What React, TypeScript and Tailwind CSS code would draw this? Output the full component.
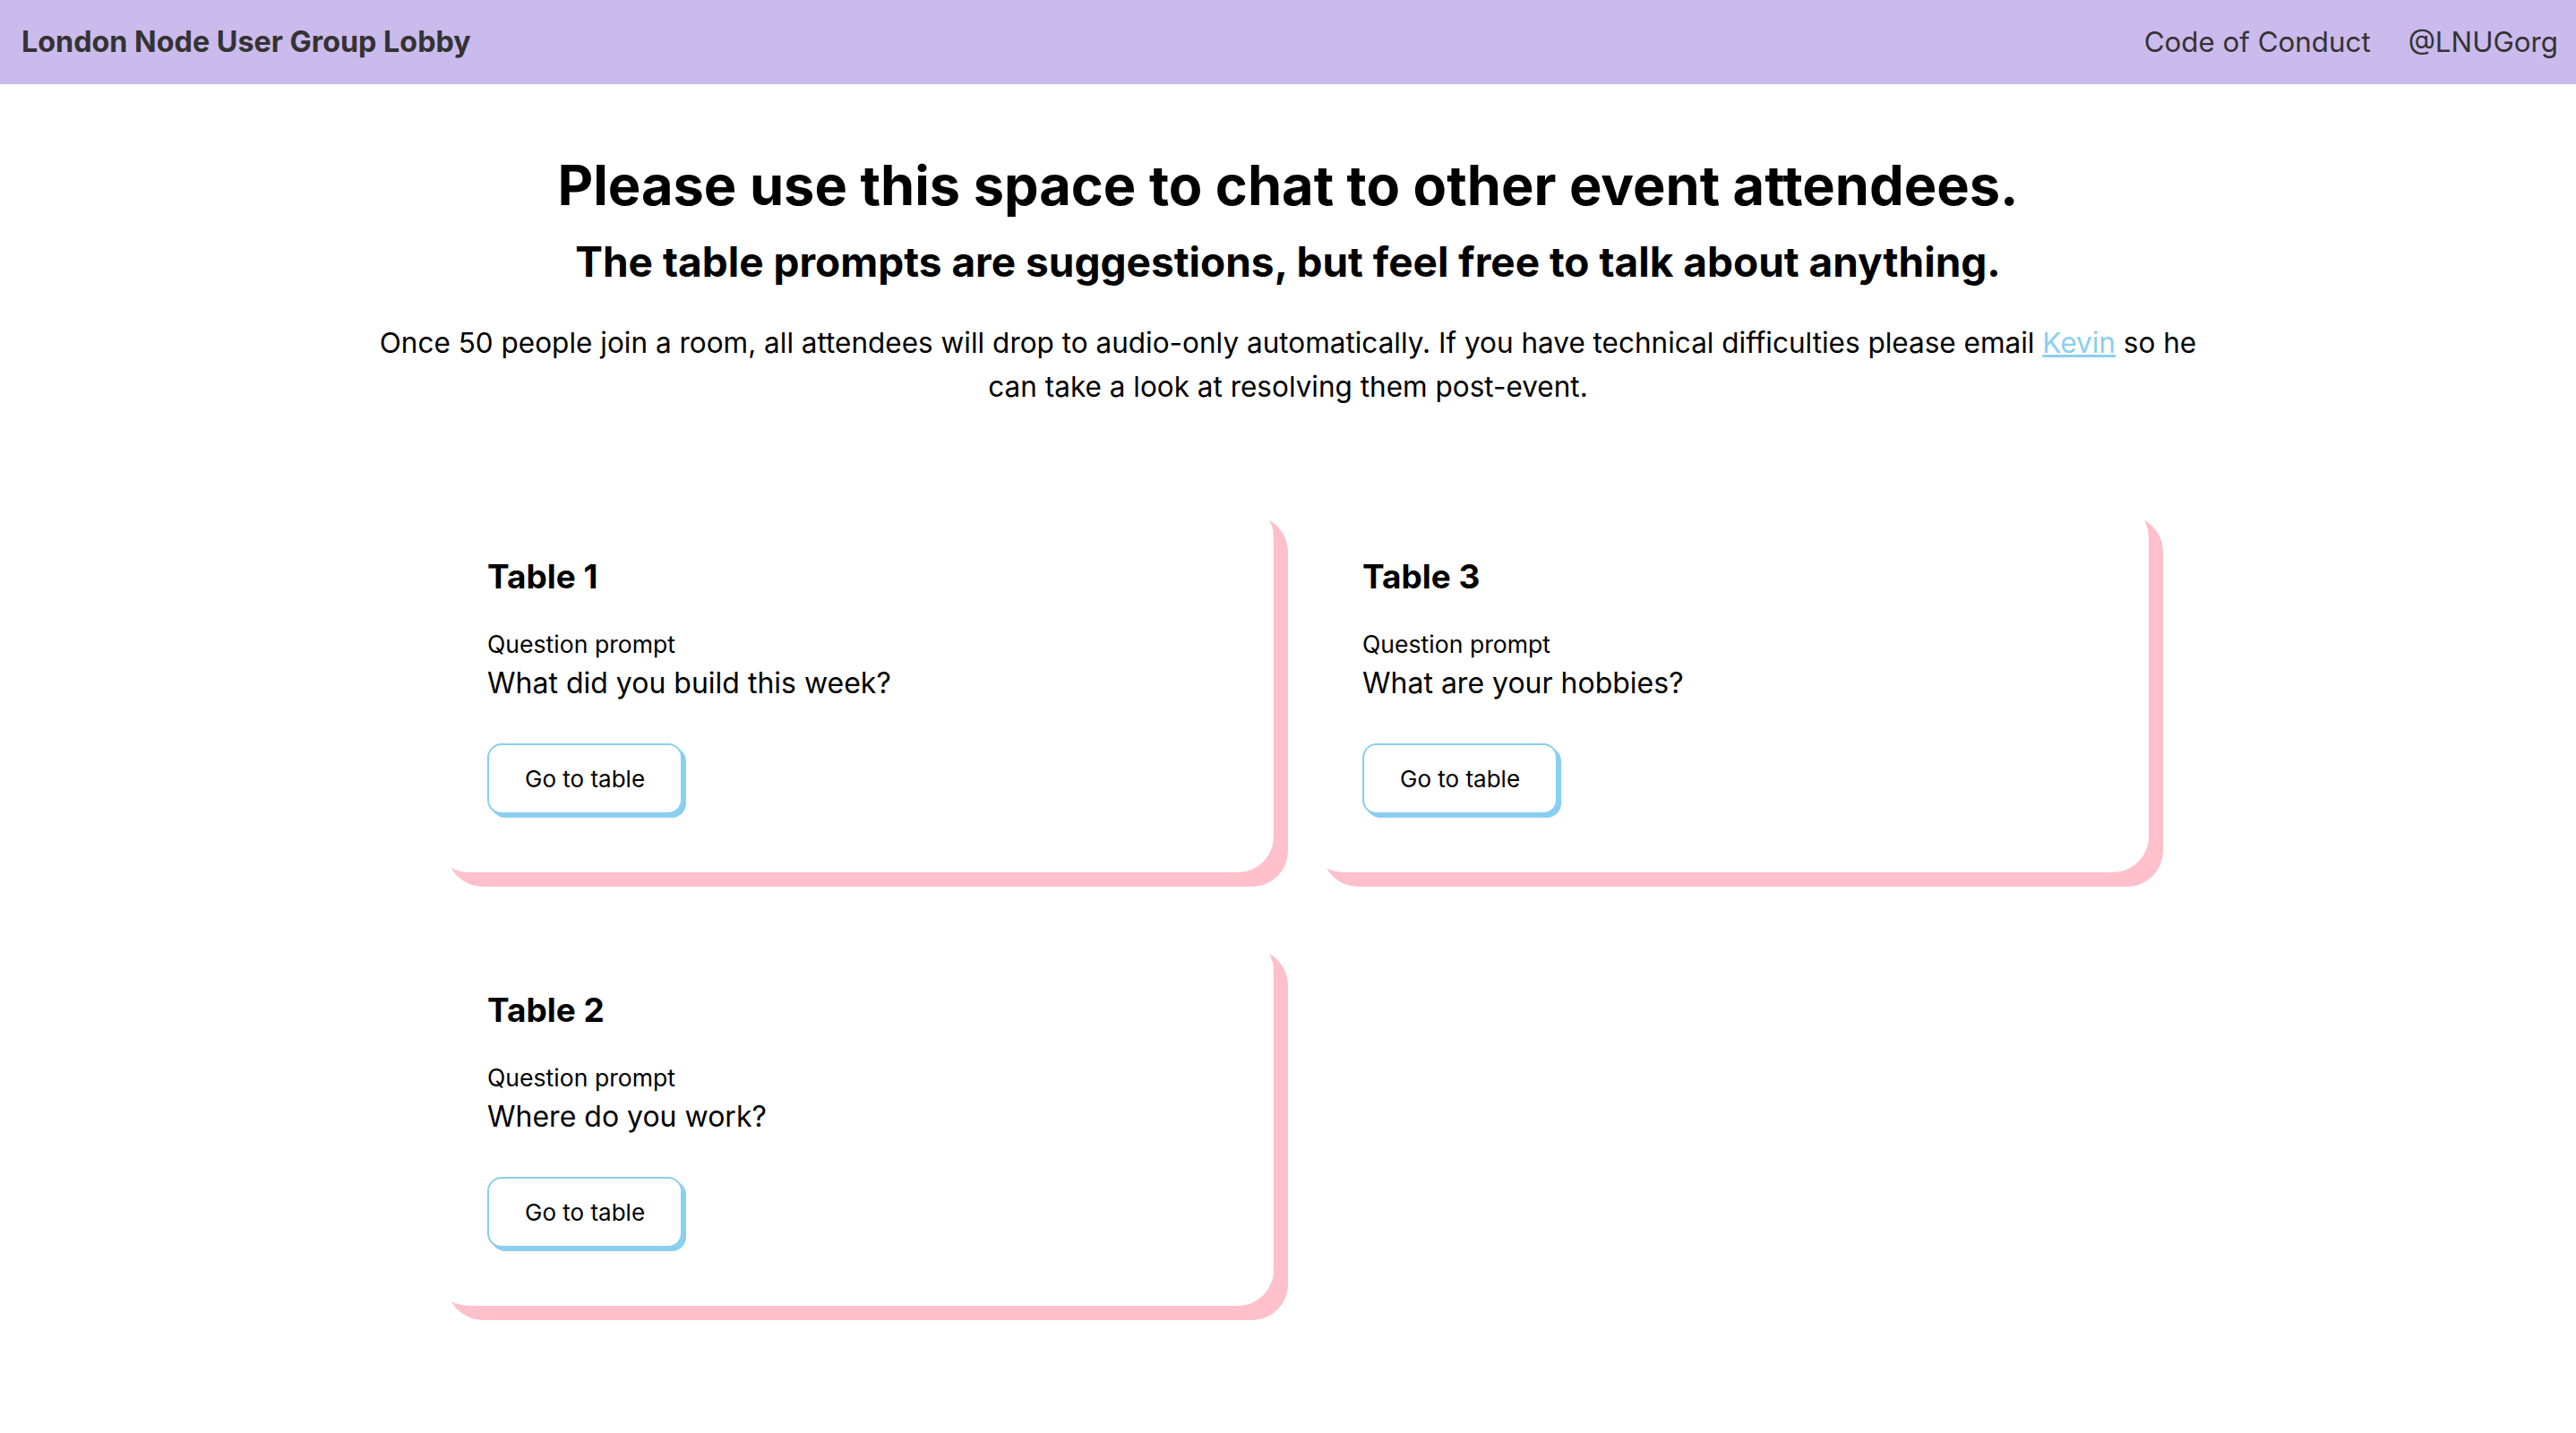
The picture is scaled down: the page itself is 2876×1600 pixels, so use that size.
import React from 'react';

const tables = [
  { name: "Table 1", prompt: "What did you build this week?" },
  { name: "Table 3", prompt: "What are your hobbies?" },
  { name: "Table 2", prompt: "Where do you work?" },
];

const TableCard = ({ name, prompt }: { name: string; prompt: string }) => {
  return (
    <div className="bg-white rounded-[40px] shadow-[16px_16px_0_#ffc0cb] pl-[61px] pt-[62px] pb-[65px]">
      <h3 className="text-[37px] font-bold leading-[44px] text-black">{name}</h3>
      <p className="mt-[34px] text-[26.6px] leading-[39px] text-black">Question prompt</p>
      <p className="text-[32px] leading-[48px] text-black">{prompt}</p>
      <button className="mt-[43px] h-[79px] px-[40px] bg-white border-2 border-[#89cff0] rounded-[16px] shadow-[4px_4px_0_#89cff0] text-[26px] text-black">
        Go to table
      </button>
    </div>
  );
};

export default function App() {
  return (
    <div className="min-h-screen bg-white font-['Inter',sans-serif]">
      {/* Top bar */}
      <header className="h-[94px] bg-[#cbbaec] flex items-center justify-between pl-[24px] pr-[20px] text-[#333333]">
        <span className="text-[32.3px] font-bold">London Node User Group Lobby</span>
        <nav className="flex items-center gap-[42px] text-[31.3px]">
          <a>Code of Conduct</a>
          <a>@LNUGorg</a>
        </nav>
      </header>

      <main className="pt-[77px]">
        <h1 className="text-center text-[61.3px] font-bold leading-[72px] text-black">
          Please use this space to chat to other event attendees.
        </h1>
        <h2 className="mt-[22px] text-center text-[46px] font-bold leading-[54px] text-black">
          The table prompts are suggestions, but feel free to talk about anything.
        </h2>
        <p className="mx-auto mt-[39px] max-w-[2060px] text-center text-[31.5px] leading-[49px] text-black">
          Once 50 people join a room, all attendees will drop to audio-only automatically. If you have technical
          difficulties please email <a className="text-[#89cff0] underline">Kevin</a> so he can take a look at
          resolving them post-event.
        </p>

        {/* Tables */}
        <div className="mx-auto mt-[104px] grid w-[1922px] grid-cols-2 gap-x-[38px] gap-y-[70px] pl-[6px]">
          {tables.map((t) => (
            <TableCard key={t.name} name={t.name} prompt={t.prompt} />
          ))}
        </div>
      </main>
    </div>
  );
}
